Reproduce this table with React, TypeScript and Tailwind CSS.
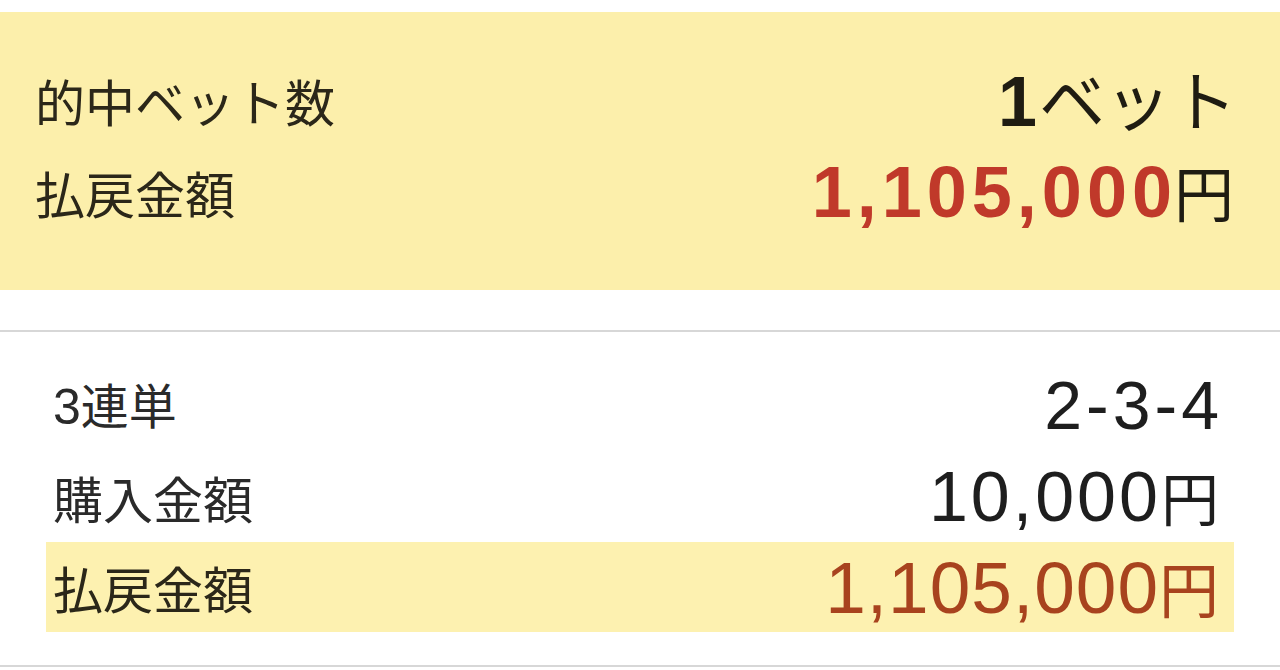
import React from "react";

const jp = {
  fontFamily: '"Noto Sans CJK JP", "Noto Sans", sans-serif',
};

export default function App() {
  return (
    <div
      className="w-[1280px] h-[670px] bg-white overflow-hidden pt-[12px]"
      style={jp}
    >
      {/* Summary panel */}
      <div className="h-[278px] bg-[#fcefab] pl-[35px] pr-[46px] pt-[42px] flex flex-col">
        <div className="h-[92px] flex items-center justify-between">
          <span className="text-[50px] leading-none text-[#2b2719]">的中ベット数</span>
          <span className="flex items-baseline leading-none text-[#1f1c12] -mr-[3px]">
            <span className="font-['Liberation_Sans',sans-serif] font-bold text-[70px] mr-[2px]">1</span>
            <span className="text-[66px]">ベット</span>
          </span>
        </div>
        <div className="h-[92px] flex items-center justify-between">
          <span className="text-[50px] leading-none text-[#2b2719]">払戻金額</span>
          <span className="flex items-baseline leading-none">
            <span className="font-['Liberation_Sans',sans-serif] font-bold text-[72px] tracking-[5px] text-[#c0392a]">1,105,000</span>
            <span className="text-[60px] text-[#1f1c12] -ml-[3px]">円</span>
          </span>
        </div>
      </div>

      {/* separator */}
      <div className="h-[40px]" />
      <div className="h-[2px] bg-[#d7d7d7]" />

      {/* Detail section */}
      <div className="px-[46px] pt-[27px]">
        <div className="h-[92px] flex items-center justify-between pl-[7px] pr-[15px]">
          <span className="text-[48px] leading-none text-[#2a2a2a]">
            <span className="font-['Liberation_Sans',sans-serif] text-[50px]">3</span>連単
          </span>
          <span className="font-['Liberation_Sans',sans-serif] text-[68px] tracking-[4px] leading-none text-[#1e1e1e] -mr-[4px]">
            2-3-4
          </span>
        </div>
        <div className="h-[91px] flex items-center justify-between pl-[7px] pr-[15px]">
          <span className="text-[50px] leading-none text-[#2a2a2a]">購入金額</span>
          <span className="flex items-baseline leading-none text-[#1e1e1e]">
            <span className="font-['Liberation_Sans',sans-serif] text-[70px] tracking-[3px]">10,000</span>
            <span className="text-[58px]">円</span>
          </span>
        </div>
        <div className="h-[90px] flex items-center justify-between bg-[#fdf1b0] pl-[7px] pr-[15px]">
          <span className="text-[50px] leading-none text-[#2b2719]">払戻金額</span>
          <span className="flex items-baseline leading-none text-[#a8431e]">
            <span className="font-['Liberation_Sans',sans-serif] text-[73px] tracking-[1px]">1,105,000</span>
            <span className="text-[60px]">円</span>
          </span>
        </div>
      </div>
      <div className="h-[33px]" />
      <div className="h-[2px] bg-[#d7d7d7]" />
    </div>
  );
}
